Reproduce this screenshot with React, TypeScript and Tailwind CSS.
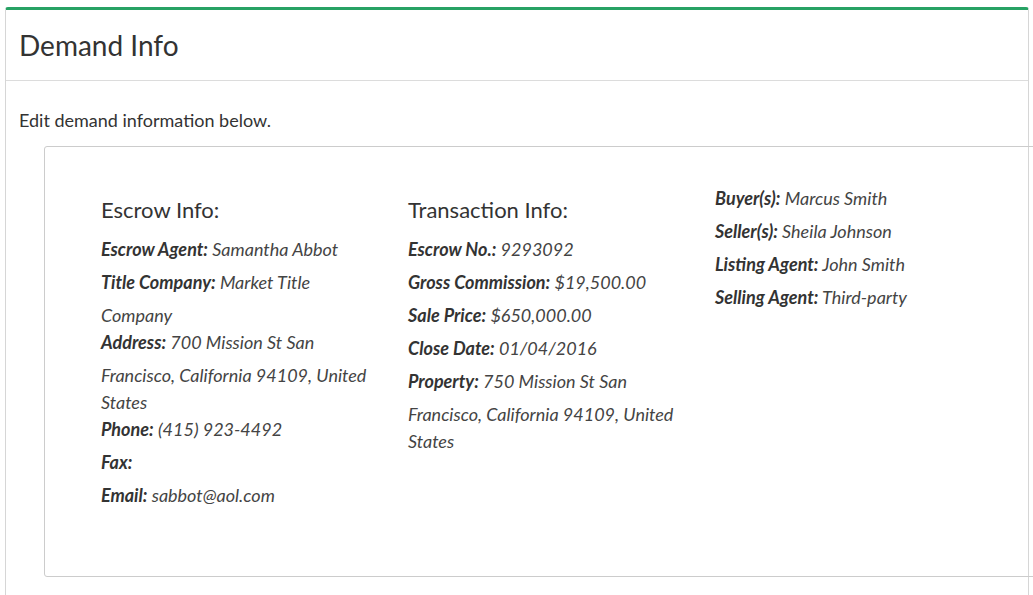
import React from "react";

type Item = { label: string; value: string[] };

const escrow: Item[] = [
  { label: "Escrow Agent:", value: ["Samantha Abbot"] },
  { label: "Title Company:", value: ["Market Title", "Company"] },
  { label: "Address:", value: ["700 Mission St San", "Francisco, California 94109, United", "States"] },
  { label: "Phone:", value: ["(415) 923-4492"] },
  { label: "Fax:", value: [] },
  { label: "Email:", value: ["sabbot@aol.com"] },
];

const transaction: Item[] = [
  { label: "Escrow No.:", value: ["9293092"] },
  { label: "Gross Commission:", value: ["$19,500.00"] },
  { label: "Sale Price:", value: ["$650,000.00"] },
  { label: "Close Date:", value: ["01/04/2016"] },
  { label: "Property:", value: ["750 Mission St San", "Francisco, California 94109, United", "States"] },
];

const parties: Item[] = [
  { label: "Buyer(s):", value: ["Marcus Smith"] },
  { label: "Seller(s):", value: ["Sheila Johnson"] },
  { label: "Listing Agent:", value: ["John Smith"] },
  { label: "Selling Agent:", value: ["Third-party"] },
];

// first line gets the label's 6px bottom margin, wrapped lines stay at 27px
function InfoLine({ item }: { item: Item }) {
  const [first, ...rest] = item.value;
  return (
    <div className="text-[18px] leading-[27px] italic text-[#444]">
      <div>
        <span className="mb-[6px] inline-block font-bold text-[#333]">{item.label}</span>
        {first && <span> {first}</span>}
      </div>
      {rest.map((line) => (
        <div key={line}>{line}</div>
      ))}
    </div>
  );
}

function Column({ title, items }: { title?: string; items: Item[] }) {
  return (
    <div className="w-[307px] pr-[30px]">
      {title && (
        <h4 className="mt-[12px] mb-[13px] text-[22px] leading-[26px] text-[#333]">{title}</h4>
      )}
      {items.map((item) => (
        <InfoLine key={item.label} item={item} />
      ))}
    </div>
  );
}

export default function App() {
  return (
    <div
      className="h-[595px] w-[1033px] overflow-hidden bg-white"
      style={{ fontFamily: "Lato, 'Liberation Sans', sans-serif" }}
    >
      <div className="mt-[7px] ml-[5px] min-h-[700px] w-[1024px] rounded-[3px] border border-t-[3px] border-[#d6d6d6] border-t-[#27a264]">
        <div className="flex h-[71px] items-center border-b border-[#dcdcdc] pl-[13px]">
          <h3 className="text-[28px] text-[#333]">Demand Info</h3>
        </div>
        <div className="pl-[13px] pt-[26px]">
          <p className="text-[18px] leading-[27px] text-[#333]">Edit demand information below.</p>
          <div className="mt-[12px] ml-[25px] flex h-[431px] w-[1000px] rounded-[3px] border border-[#cccccc] pt-[38px] pl-[56px]">
            <Column title="Escrow Info:" items={escrow} />
            <Column title="Transaction Info:" items={transaction} />
            <Column items={parties} />
          </div>
        </div>
      </div>
    </div>
  );
}
